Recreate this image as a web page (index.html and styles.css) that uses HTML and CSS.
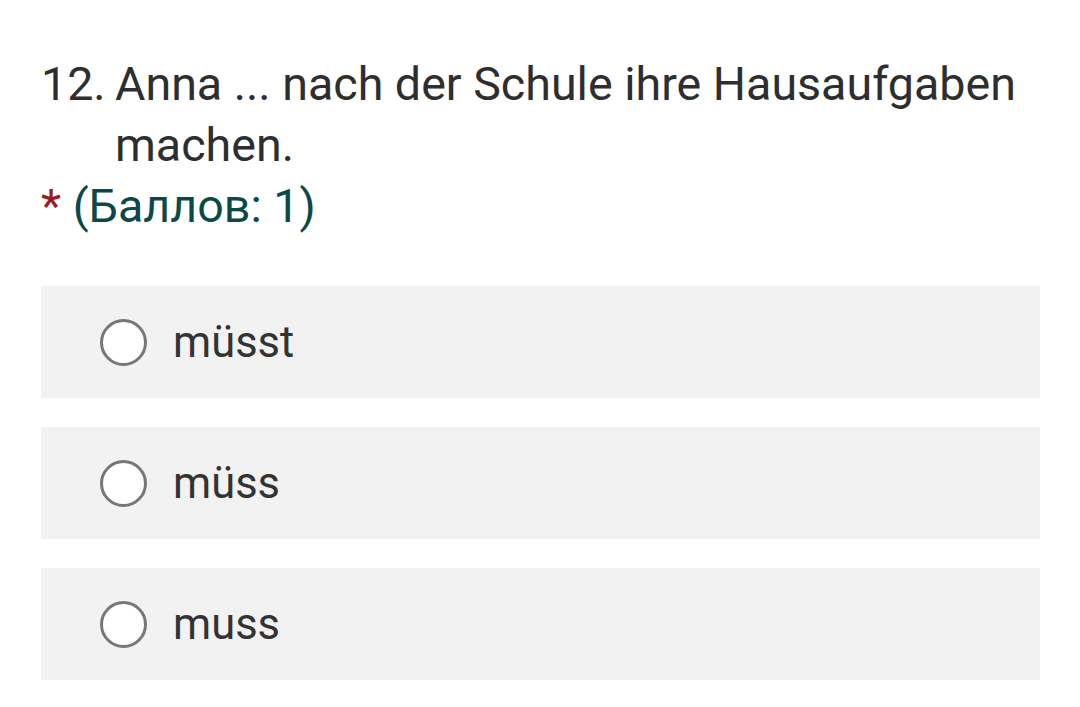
FILE: index.html
```html
<!DOCTYPE html>
<html lang="de">
<head>
  <meta charset="UTF-8" />
  <title>Frage 12</title>
  <link rel="stylesheet" href="styles.css">
</head>
<body>
  <div class="question">
    <div class="title">
      <span class="num">12.</span>
      <span class="text">Anna ... nach der Schule ihre Hausaufgaben machen.</span>
    </div>
    <div class="points"><span class="req">*</span> (Баллов: 1)</div>
  </div>

  <!-- Варианты ответа -->
  <div class="options">
    <label class="option">
      <span class="radio"></span>
      <span class="label">müsst</span>
    </label>
    <label class="option">
      <span class="radio"></span>
      <span class="label">müss</span>
    </label>
    <label class="option">
      <span class="radio"></span>
      <span class="label">muss</span>
    </label>
  </div>
</body>
</html>
```

FILE: styles.css
```css
body {
  margin: 0;
  padding: 54px 40px 0 41px;
  font-family: Roboto, 'Noto Sans', sans-serif;
  background: #fff;
  color: #333;
}

.question {
  font-size: 46.6px;
  line-height: 61px;
}

.title {
  display: flex;
  color: #2e2e2e;
}

.num {
  flex: none;
  width: 74px;
}

.points {
  color: #0b4848;
}

.req {
  color: #9b1c1c;
}

.options {
  margin-top: 49px;
  display: flex;
  flex-direction: column;
  gap: 29px;
}

.option {
  display: flex;
  align-items: center;
  height: 112px;
  padding-left: 59px;
  background: #f2f2f2;
  font-size: 43.5px;
  color: #333;
}

.radio {
  width: 41px;
  height: 41px;
  border: 3px solid #777;
  border-radius: 50%;
  background: #fff;
  margin-right: 26px;
}
```
